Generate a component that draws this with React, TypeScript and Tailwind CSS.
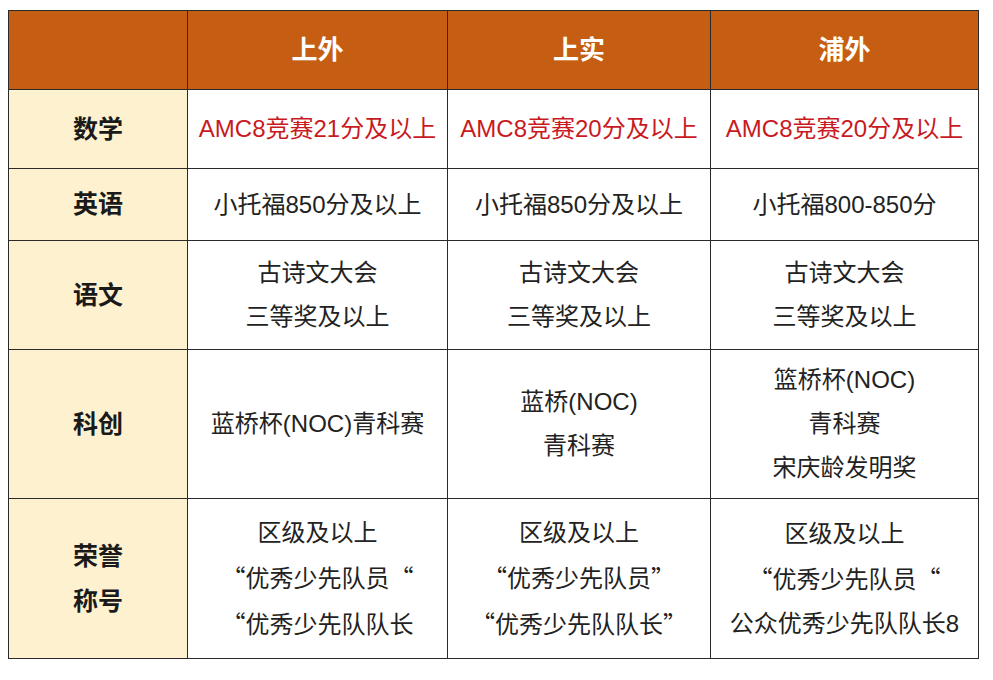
const schools = ['上外', '上实', '浦外'];

type Row = {
  label: string[];
  height: string;
  red?: boolean;
  cells: string[][];
};

const rows: Row[] = [
  {
    label: ['数学'],
    height: 'h-[79px]',
    red: true,
    cells: [['AMC8竞赛21分及以上'], ['AMC8竞赛20分及以上'], ['AMC8竞赛20分及以上']],
  },
  {
    label: ['英语'],
    height: 'h-[72px]',
    cells: [['小托福850分及以上'], ['小托福850分及以上'], ['小托福800-850分']],
  },
  {
    label: ['语文'],
    height: 'h-[109px]',
    cells: [
      ['古诗文大会', '三等奖及以上'],
      ['古诗文大会', '三等奖及以上'],
      ['古诗文大会', '三等奖及以上'],
    ],
  },
  {
    label: ['科创'],
    height: 'h-[149px]',
    cells: [['蓝桥杯(NOC)青科赛'], ['蓝桥(NOC)', '青科赛'], ['篮桥杯(NOC)', '青科赛', '宋庆龄发明奖']],
  },
  {
    label: ['荣誉', '称号'],
    height: 'h-[160px]',
    cells: [
      ['区级及以上', '“优秀少先队员“', '“优秀少先队队长'],
      ['区级及以上', '“优秀少先队员”', '“优秀少先队队长”'],
      ['区级及以上', '“优秀少先队员“', '公众优秀少先队队长8'],
    ],
  },
];

// curly quotes get the CJK font so they take a full-width cell like the original
const Line = ({ text }: { text: string }) => (
  <div>
    {text.split(/([“”])/).map((part, i) =>
      part === '“' || part === '”' ? (
        <span key={i} className="font-['Noto_Sans_CJK_SC']">
          {part}
        </span>
      ) : (
        <span key={i}>{part}</span>
      ),
    )}
  </div>
);

export default function App() {
  return (
    <div
      lang="zh-CN"
      className="w-[993px] h-[680px] bg-white pl-[8px] pt-[10px]"
      style={{ fontFamily: '"Liberation Sans", "Noto Sans CJK SC", sans-serif' }}
    >
      <table className="table-fixed border-collapse w-[970px]">
        <colgroup>
          <col className="w-[179px]" />
          <col className="w-[260px]" />
          <col className="w-[263px]" />
          <col className="w-[268px]" />
        </colgroup>
        <thead>
          <tr className="h-[79px] bg-[#c55e12]">
            <th className="border-[1.5px] border-[#2a2a2a]" />
            {schools.map((s) => (
              <th key={s} className="border-[1.5px] border-[#2a2a2a] text-white text-[26px] font-bold text-center">
                {s}
              </th>
            ))}
          </tr>
        </thead>
        <tbody>
          {rows.map((row) => (
            <tr key={row.label.join('')} className={row.height}>
              <td className="border-[1.5px] border-[#2a2a2a] bg-[#fef1cf] text-center text-[25px] font-bold text-[#1a1a1a] leading-[45px]">
                {row.label.map((l) => (
                  <div key={l}>{l}</div>
                ))}
              </td>
              {row.cells.map((lines, i) => (
                <td
                  key={i}
                  className={`border-[1.5px] border-[#2a2a2a] text-center text-[24px] leading-[44px] whitespace-nowrap ${
                    row.red ? 'text-[#c81a1f]' : 'text-[#222222]'
                  }`}
                >
                  {lines.map((l) => (
                    <Line key={l} text={l} />
                  ))}
                </td>
              ))}
            </tr>
          ))}
        </tbody>
      </table>
    </div>
  );
}
